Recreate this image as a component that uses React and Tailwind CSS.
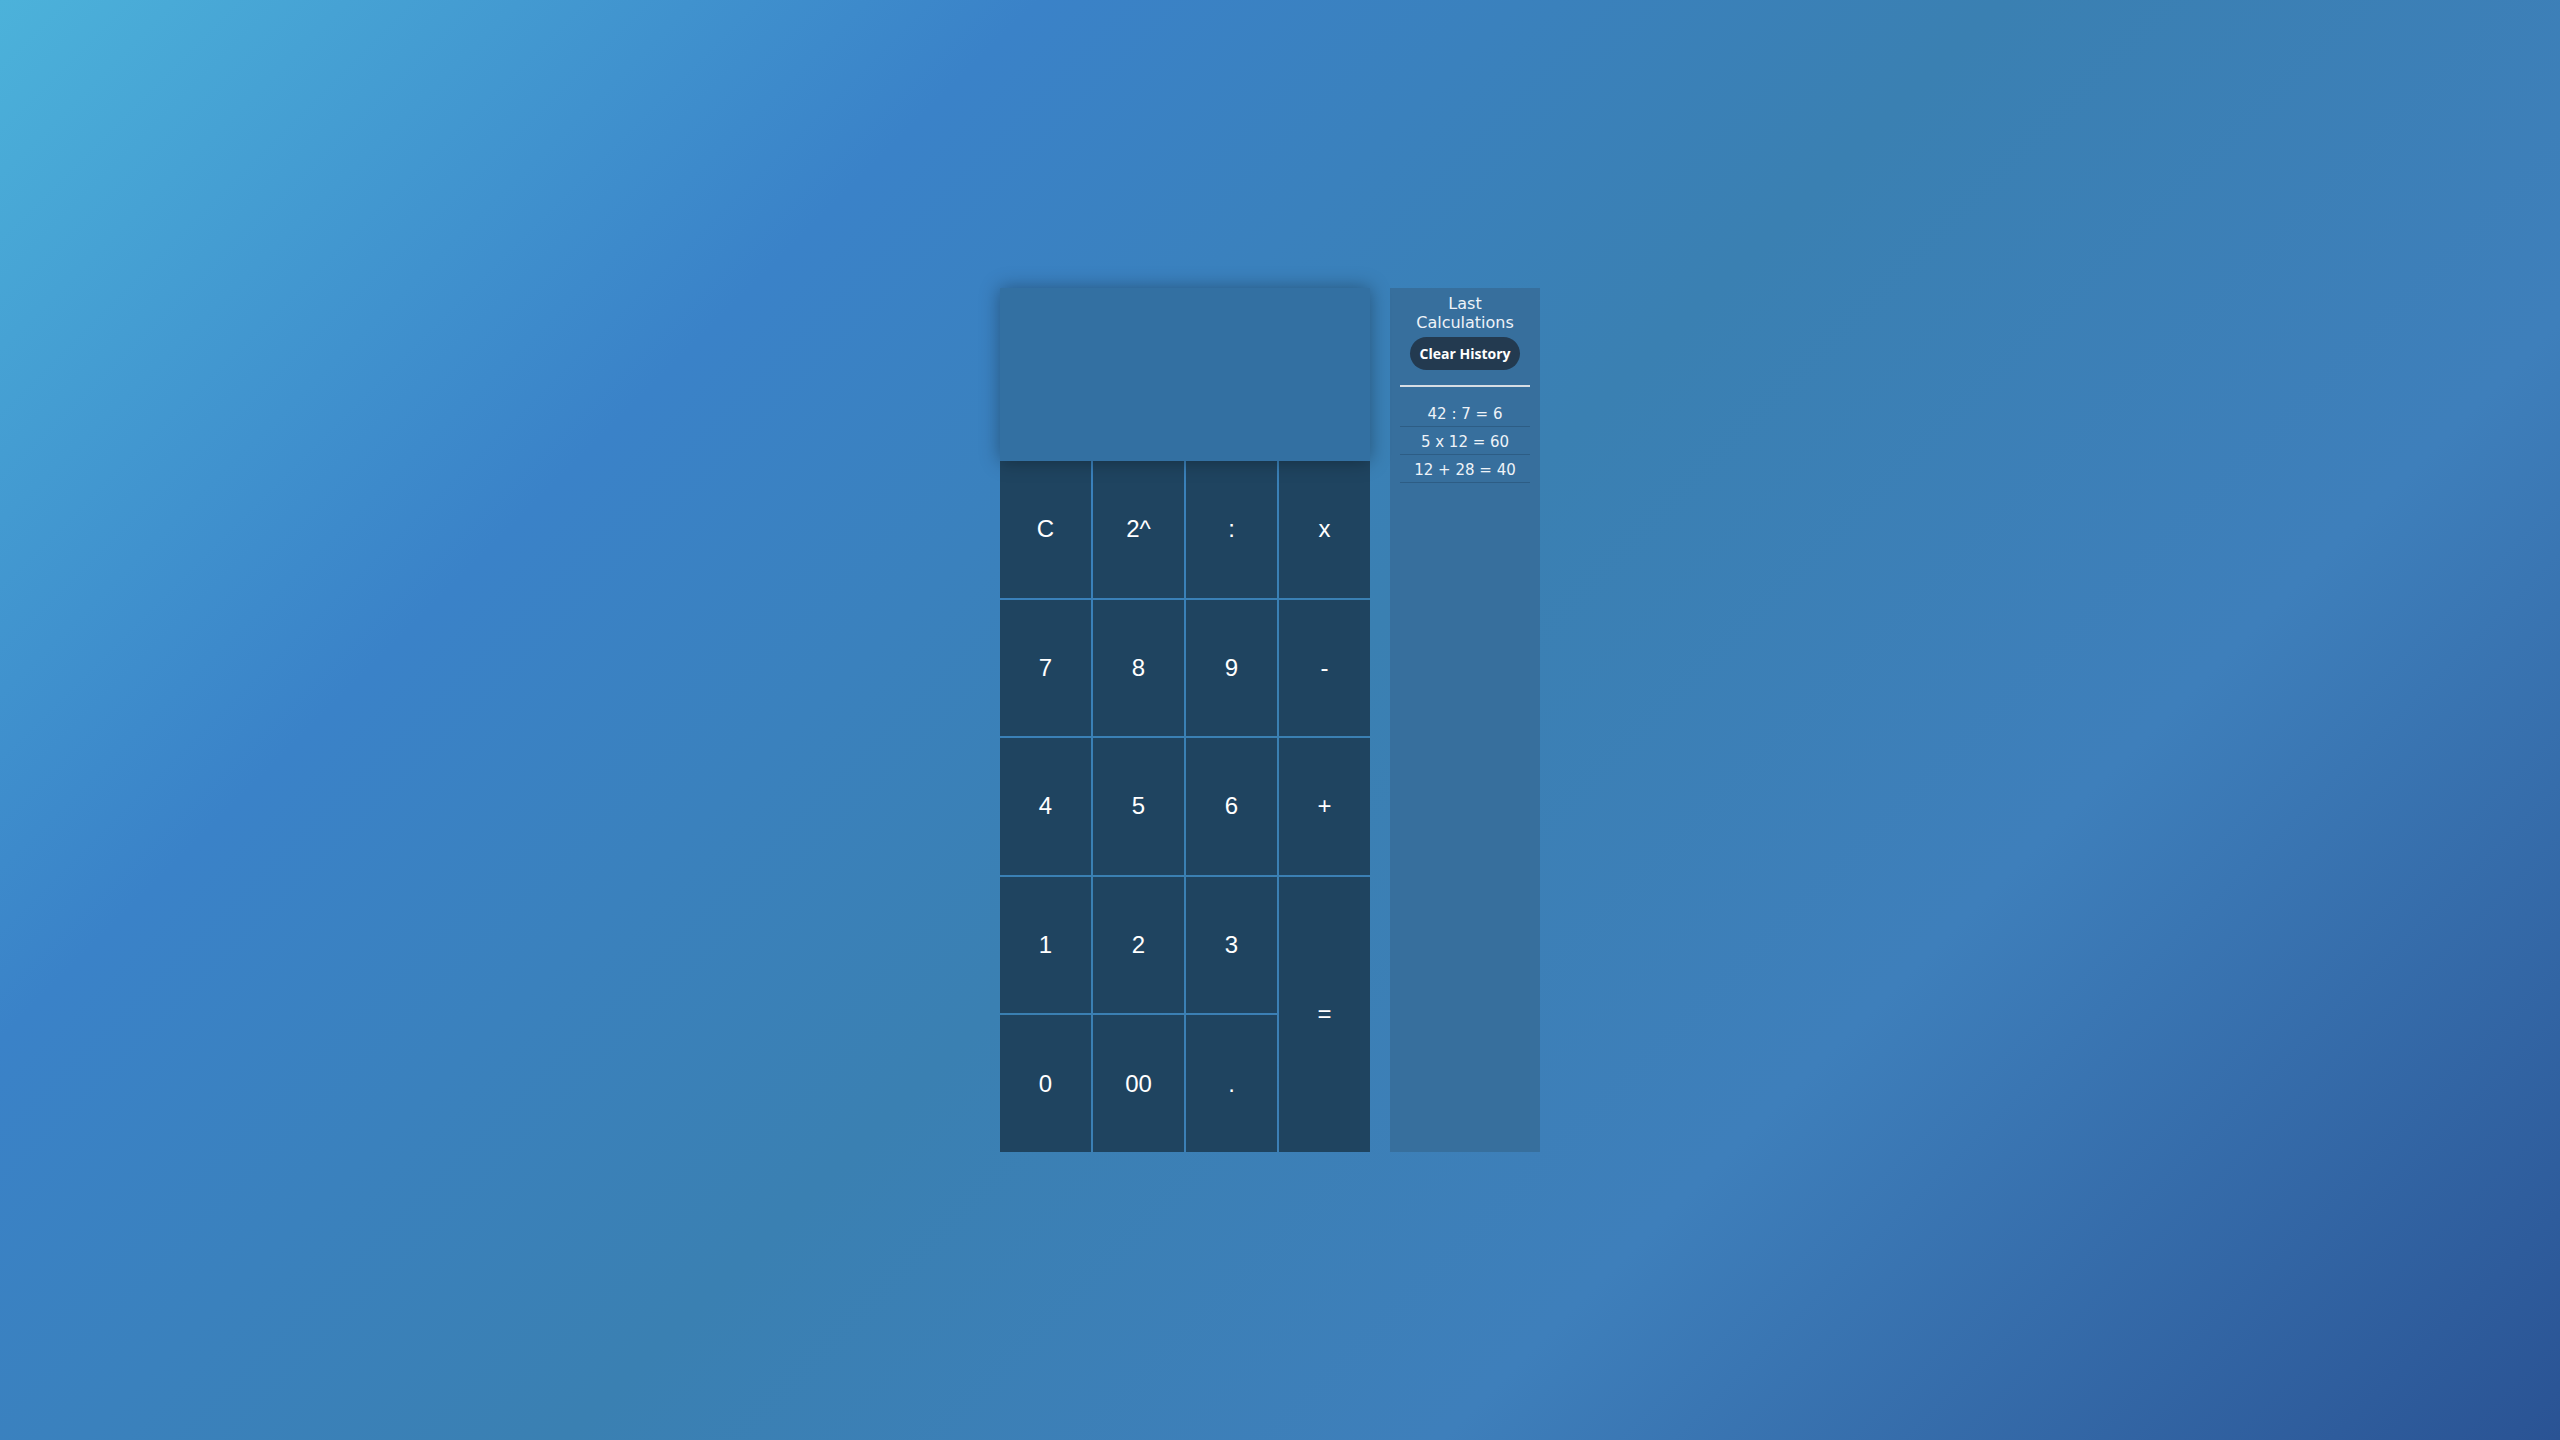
import { useState } from "react";

const keys = [
  { label: "C" },
  { label: "2^" },
  { label: ":" },
  { label: "x" },
  { label: "7" },
  { label: "8" },
  { label: "9" },
  { label: "-" },
  { label: "4" },
  { label: "5" },
  { label: "6" },
  { label: "+" },
  { label: "1" },
  { label: "2" },
  { label: "3" },
  { label: "=", tall: true },
  { label: "0" },
  { label: "00" },
  { label: "." },
];

export default function App() {
  const [history, setHistory] = useState(["42 : 7 = 6", "5 x 12 = 60", "12 + 28 = 40"]);

  return (
    <div className="min-h-screen w-full flex items-center justify-center bg-[linear-gradient(135deg,#4cb2da_0%,#3a82c8_26%,#3a80b2_50%,#3e7fbb_72%,#2a5394_100%)]">
      <div className="flex">
        <div className="w-[370px] h-[864px] flex flex-col">
          <div className="relative z-10 h-[173px] bg-[#3370a2] shadow-[0_0_18px_rgba(0,0,0,0.35)]"></div>
          <div className="grid grid-cols-4 grid-rows-5 gap-[2px] h-[691px]">
            {keys.map((k) => (
              <button
                key={k.label}
                className={
                  "flex items-center justify-center bg-[#1f4460] text-white text-[24px] font-['Liberation_Sans',Arial,sans-serif] " +
                  (k.tall ? "row-span-2" : "")
                }
              >
                {k.label}
              </button>
            ))}
          </div>
        </div>
        <div className="mx-5 w-[150px] h-[864px] bg-[#376f9d] flex flex-col items-center pt-[6px] font-['DejaVu_Sans','Noto_Sans',sans-serif] text-[#eef3f8]">
          <div className="text-center text-[16px] leading-[19px]">
            Last
            <br />
            Calculations
          </div>
          <button
            onClick={() => setHistory([])}
            className="mt-[5px] h-[33px] w-[110px] rounded-full bg-[#233a50] text-white text-[14px] font-bold font-['Open_Sans',sans-serif]"
          >
            Clear History
          </button>
          <div className="mt-[15px] w-[130px] h-[2px] bg-[#d6dde4]"></div>
          <ul className="mt-[12px] w-[130px]">
            {history.map((h) => (
              <li key={h} className="h-[28px] flex items-end justify-center pb-[1px] text-[15px] border-b border-[#2d5d85]">
                {h}
              </li>
            ))}
          </ul>
        </div>
      </div>
    </div>
  );
}
